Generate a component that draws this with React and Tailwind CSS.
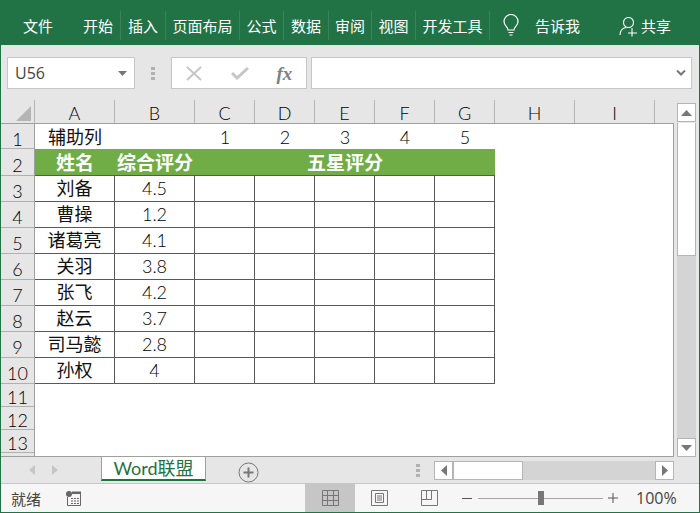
import React from "react";

const tabs = [
  ["开始", "w-[45px]"],
  ["插入", "w-[45px]"],
  ["页面布局", "w-[74px]"],
  ["公式", "w-[44px]"],
  ["数据", "w-[45px]"],
  ["审阅", "w-[43px]"],
  ["视图", "w-[44px]"],
  ["开发工具", "w-[74px]"],
];
const colHeads = [
  ["A", "w-[80px]"],
  ["B", "w-[80px]"],
  ["C", "w-[60px]"],
  ["D", "w-[60px]"],
  ["E", "w-[60px]"],
  ["F", "w-[60px]"],
  ["G", "w-[60px]"],
  ["H", "w-[80px]"],
  ["I", "w-[80px]"],
];
const people = [
  ["刘备", "4.5"],
  ["曹操", "1.2"],
  ["诸葛亮", "4.1"],
  ["关羽", "3.8"],
  ["张飞", "4.2"],
  ["赵云", "3.7"],
  ["司马懿", "2.8"],
  ["孙权", "4"],
];
const rowHeads = [
  [1, "h-[25px] pt-[5px]"],
  [2, "h-[27px] pt-[5px]"],
  [3, "h-[26px] pt-[5px]"],
  [4, "h-[26px] pt-[5px]"],
  [5, "h-[26px] pt-[5px]"],
  [6, "h-[26px] pt-[5px]"],
  [7, "h-[26px] pt-[5px]"],
  [8, "h-[26px] pt-[5px]"],
  [9, "h-[26px] pt-[5px]"],
  [10, "h-[26px] pt-[5px]"],
  [11, "h-[23px] pt-[3px]"],
  [12, "h-[23px] pt-[3px]"],
  [13, "h-[23px] pt-[3px]"],
];

const cell = "flex items-center justify-center h-[26px] pb-[1px] border-r border-b border-[#595959]";

const Rows = () => (
  <div className="w-[34px] shrink-0 bg-[#e6e6e6] border-r border-t border-b border-[#9f9f9f]">
    {rowHeads.map(([n, h]) => (
      <div key={n} className={`${h} flex items-center justify-center border-b border-[#b0b0b0] text-[18px] font-light leading-none text-black`}>
        {n}
      </div>
    ))}
  </div>
);

const Sheet = () => (
  <div className="w-[460px] text-[18px] leading-none text-[#111]">
    <div className="flex h-[25px]">
      <div className="w-[160px] pl-[13px] flex items-center pt-[1px]">辅助列</div>
      {[1, 2, 3, 4, 5].map((n) => (
        <div key={n} className="w-[60px] flex items-center justify-center pt-[1px] font-light text-black">{n}</div>
      ))}
    </div>
    <div className="flex h-[27px] bg-[#70ad47] text-white font-bold text-[19px] border-b border-[#595959]">
      <div className="w-[80px] flex items-center justify-center">姓名</div>
      <div className="w-[80px] flex items-center justify-center">综合评分</div>
      <div className="w-[300px] flex items-center justify-center">五星评分</div>
    </div>
    {people.map(([name, score]) => (
      <div key={name} className="flex">
        <div className={`w-[80px] ${cell}`}>{name}</div>
        <div className={`w-[80px] ${cell} font-light text-black`}>{score}</div>
        <div className={`w-[60px] ${cell}`}></div>
        <div className={`w-[60px] ${cell}`}></div>
        <div className={`w-[60px] ${cell}`}></div>
        <div className={`w-[60px] ${cell}`}></div>
        <div className={`w-[60px] ${cell}`}></div>
      </div>
    ))}
  </div>
);

const ScrollBtn = ({ dir }) => (
  <div className="w-[19px] h-[19px] bg-white border border-[#b5b5b5] flex items-center justify-center">
    <svg width="11" height="6" viewBox="0 0 11 6">
      <path d={dir === "up" ? "M5.5 0L11 6H0z" : "M0 0h11L5.5 6z"} fill="#777" />
    </svg>
  </div>
);

const Dots = () => (
  <>
    <span className="w-[4px] h-[3px] bg-[#b1b1b1]"></span>
    <span className="w-[4px] h-[3px] bg-[#b1b1b1]"></span>
    <span className="w-[4px] h-[3px] bg-[#b1b1b1]"></span>
  </>
);

export default function App() {
  return (
    <div className="w-[700px] h-[513px] flex flex-col overflow-hidden bg-[#e6e6e6] border-x border-b border-[#217346] font-['Lato','Noto_Sans_CJK_SC',sans-serif]">
      {/* ribbon */}
      <div className="h-[45px] -mx-px pt-[5px] shrink-0 bg-[#217346] flex items-center text-white text-[15px] font-['Noto_Sans_CJK_SC',sans-serif] leading-none">
        <div className="w-[76px] pl-[23px]">文件</div>
        {tabs.map(([t, w]) => (
          <div key={t} className={`${w} h-[29px] flex items-center justify-center border-r border-[#3b8259]`}>{t}</div>
        ))}
        <svg className="ml-[12px] mt-[1px]" width="18" height="24" viewBox="0 0 18 24" fill="none" stroke="white" strokeWidth="1.2">
          <path d="M6 16c0-3-4-4.500-4-8.500a7 7 0 0 1 14 0c0 4-4 5.500-4 8.500z" />
          <path d="M6.500 18.500h5M7.500 21h3" />
        </svg>
        <div className="ml-[15px]">告诉我</div>
        <svg className="ml-[39px] mt-[3px]" width="20" height="20" viewBox="0 0 20 20" fill="none" stroke="white" strokeWidth="1.1">
          <circle cx="9.500" cy="5.500" r="5" />
          <path d="M1 18c0-4 2.500-7 6-7.500M13 11v8.500M9 16h9" />
        </svg>
        <div className="ml-[2px]">共享</div>
      </div>

      {/* formula bar */}
      <div className="h-[55px] shrink-0 flex items-center pl-[6px] pr-[7px] pt-[1px]">
        <div className="w-[128px] h-[32px] bg-white border border-[#c6c6c6] flex items-center justify-between pl-[7px] pr-[7px] text-[16px] text-[#444] font-['Open_Sans',sans-serif]">
          U56
          <svg width="9" height="5" viewBox="0 0 9 5"><path d="M0 0h9L4.500 5z" fill="#777" /></svg>
        </div>
        <div className="w-[36px] flex flex-col items-center gap-[2px]">
          <Dots />
        </div>
        <div className="w-[137px] h-[32px] bg-white border border-[#c6c6c6] flex items-center">
          <svg className="ml-[14px]" width="16" height="15" viewBox="0 0 16 15" fill="none" stroke="#c6c6c6" strokeWidth="2">
            <path d="M1 1l14 13M15 1L1 14" />
          </svg>
          <svg className="ml-[29px]" width="18" height="14" viewBox="0 0 18 14" fill="none" stroke="#c6c6c6" strokeWidth="3">
            <path d="M1 7l5 5L17 2" />
          </svg>
          <span className="ml-[28px] text-[19px] leading-none italic font-semibold text-[#808080] font-['Liberation_Serif',serif]">fx</span>
        </div>
        <div className="ml-[4px] w-[382px] h-[32px] bg-white border border-[#c6c6c6] flex items-center justify-end pr-[5px]">
          <svg width="10" height="6" viewBox="0 0 10 6" fill="none" stroke="#777" strokeWidth="2">
            <path d="M1 0.500l4 4 4-4" />
          </svg>
        </div>
      </div>

      {/* column headers */}
      <div className="h-[23px] shrink-0 flex">
        <div className="w-[34px] h-[23px] flex items-end justify-end pr-[3px] pb-[2px] border-r border-[#b5b5b5]">
          <svg width="15" height="15" viewBox="0 0 15 15"><path d="M15 0v15H0z" fill="#b5b5b5" /></svg>
        </div>
        <div className="w-[639px] flex overflow-hidden">
          {colHeads.map(([c, w]) => (
            <div key={c} className={`${w} shrink-0 h-[23px] flex items-center justify-center border-r border-[#b5b5b5] text-[18px] font-light leading-none text-black pt-[3px]`}>
              {c}
            </div>
          ))}
        </div>
        <div className="ml-[3px] mt-[3px]">
          <ScrollBtn dir="up" />
        </div>
      </div>

      {/* grid */}
      <div className="h-[334px] shrink-0 flex overflow-hidden">
        <Rows />
        <div className="w-[639px] bg-white border-r border-b border-t border-[#9f9f9f] overflow-hidden">
          <Sheet />
        </div>
        <div className="ml-[3px] w-[19px] flex flex-col">
          <div className="h-[133px] bg-white border-x border-b border-[#b5b5b5]"></div>
          <div className="h-[182px] bg-[#d4d4d4]"></div>
          <ScrollBtn dir="down" />
        </div>
      </div>

      {/* sheet tabs */}
      <div className="h-[27px] shrink-0 flex items-start border-b border-[#c6c6c6]">
        <div className="w-[100px] h-[26px] flex items-center pl-[28px] gap-[17px]">
          <svg width="6" height="10" viewBox="0 0 6 10"><path d="M6 0v10L0 5z" fill="#c6c6c6" /></svg>
          <svg width="6" height="10" viewBox="0 0 6 10"><path d="M0 0v10l6-5z" fill="#c6c6c6" /></svg>
        </div>
        <div className="w-[105px] h-[24px] bg-white border-x border-b-2 border-[#9f9f9f] border-b-[#217346] text-[#217346] text-[18px] leading-none flex items-center justify-center">
          Word联盟
        </div>
        <svg className="ml-[32px] mt-[5px]" width="21" height="21" viewBox="0 0 21 21" fill="none" stroke="#777">
          <circle cx="10.500" cy="10.500" r="9.500" />
          <path strokeWidth="2" d="M5.500 10.500h10M10.500 5.500v10" />
        </svg>
        <div className="ml-[157px] mt-[7px] flex flex-col gap-[2px]">
          <Dots />
        </div>
        <div className="ml-[14px] mt-[4px] w-[240px] h-[19px] bg-[#d4d4d4] flex">
          <div className="w-[19px] h-[19px] bg-white border border-[#b5b5b5] flex items-center justify-center">
            <svg width="6" height="11" viewBox="0 0 6 11"><path d="M6 0v11L0 5.500z" fill="#777" /></svg>
          </div>
          <div className="w-[70px] h-[19px] bg-white border border-[#b5b5b5]"></div>
          <div className="ml-auto w-[19px] h-[19px] bg-white border border-[#b5b5b5] flex items-center justify-center">
            <svg width="6" height="11" viewBox="0 0 6 11"><path d="M0 0v11l6-5.500z" fill="#777" /></svg>
          </div>
        </div>
      </div>

      {/* status bar */}
      <div className="flex-1 bg-[#f6f6f6] flex items-center text-[#444]">
        <span className="w-[65px] pl-[10px] text-[15px] leading-none font-['Noto_Sans_CJK_SC',sans-serif]">就绪</span>
        <svg width="15" height="15" viewBox="0 0 15 15" fill="none" stroke="#666">
          <circle cx="3" cy="3" r="3" fill="#666" stroke="none" />
          <path d="M6 .500h9v2.500H6z" fill="#666" stroke="none" />
          <path d="M1.500 6v8.500h13V3" />
          <path d="M5 7.500h8M5 10h8M5 12.500h8" strokeDasharray="2 1" />
        </svg>
        <div className="ml-[224px] w-[50px] h-[28px] bg-[#c6c6c6] flex items-center justify-center">
          <svg width="17" height="16" viewBox="0 0 17 16" fill="none" stroke="#777">
            <path d="M.5.500h16v15H.5zM.5 5.500h16M.5 10.500h16M5.500.500v15M11.500.500v15" />
          </svg>
        </div>
        <svg className="ml-[16px]" width="17" height="16" viewBox="0 0 17 16" fill="none" stroke="#777">
          <path d="M.5.500h16v15H.5zM4.500 3.500h8v9h-8zM6 6h5M6 8h5M6 10h5" />
        </svg>
        <svg className="ml-[33px]" width="17" height="16" viewBox="0 0 17 16" fill="none" stroke="#777">
          <path d="M.5.500h16v15H.5zM.5 9.500h10v-9M5.500.500v9" />
        </svg>
        <div className="ml-[24px] w-[10px] h-[1px] bg-[#555]"></div>
        <div className="relative ml-[6px] w-[125px] h-[1px] bg-[#a6a6a6]">
          <div className="absolute left-[60px] -top-[7px] w-[6px] h-[14px] bg-[#777]"></div>
        </div>
        <svg className="ml-[5px]" width="10" height="10" viewBox="0 0 10 10" stroke="#555" strokeWidth="1"><path d="M0 5h10M5 0v10" /></svg>
        <span className="ml-[18px] text-[16px] leading-none font-['Open_Sans',sans-serif]">100%</span>
      </div>
    </div>
  );
}
